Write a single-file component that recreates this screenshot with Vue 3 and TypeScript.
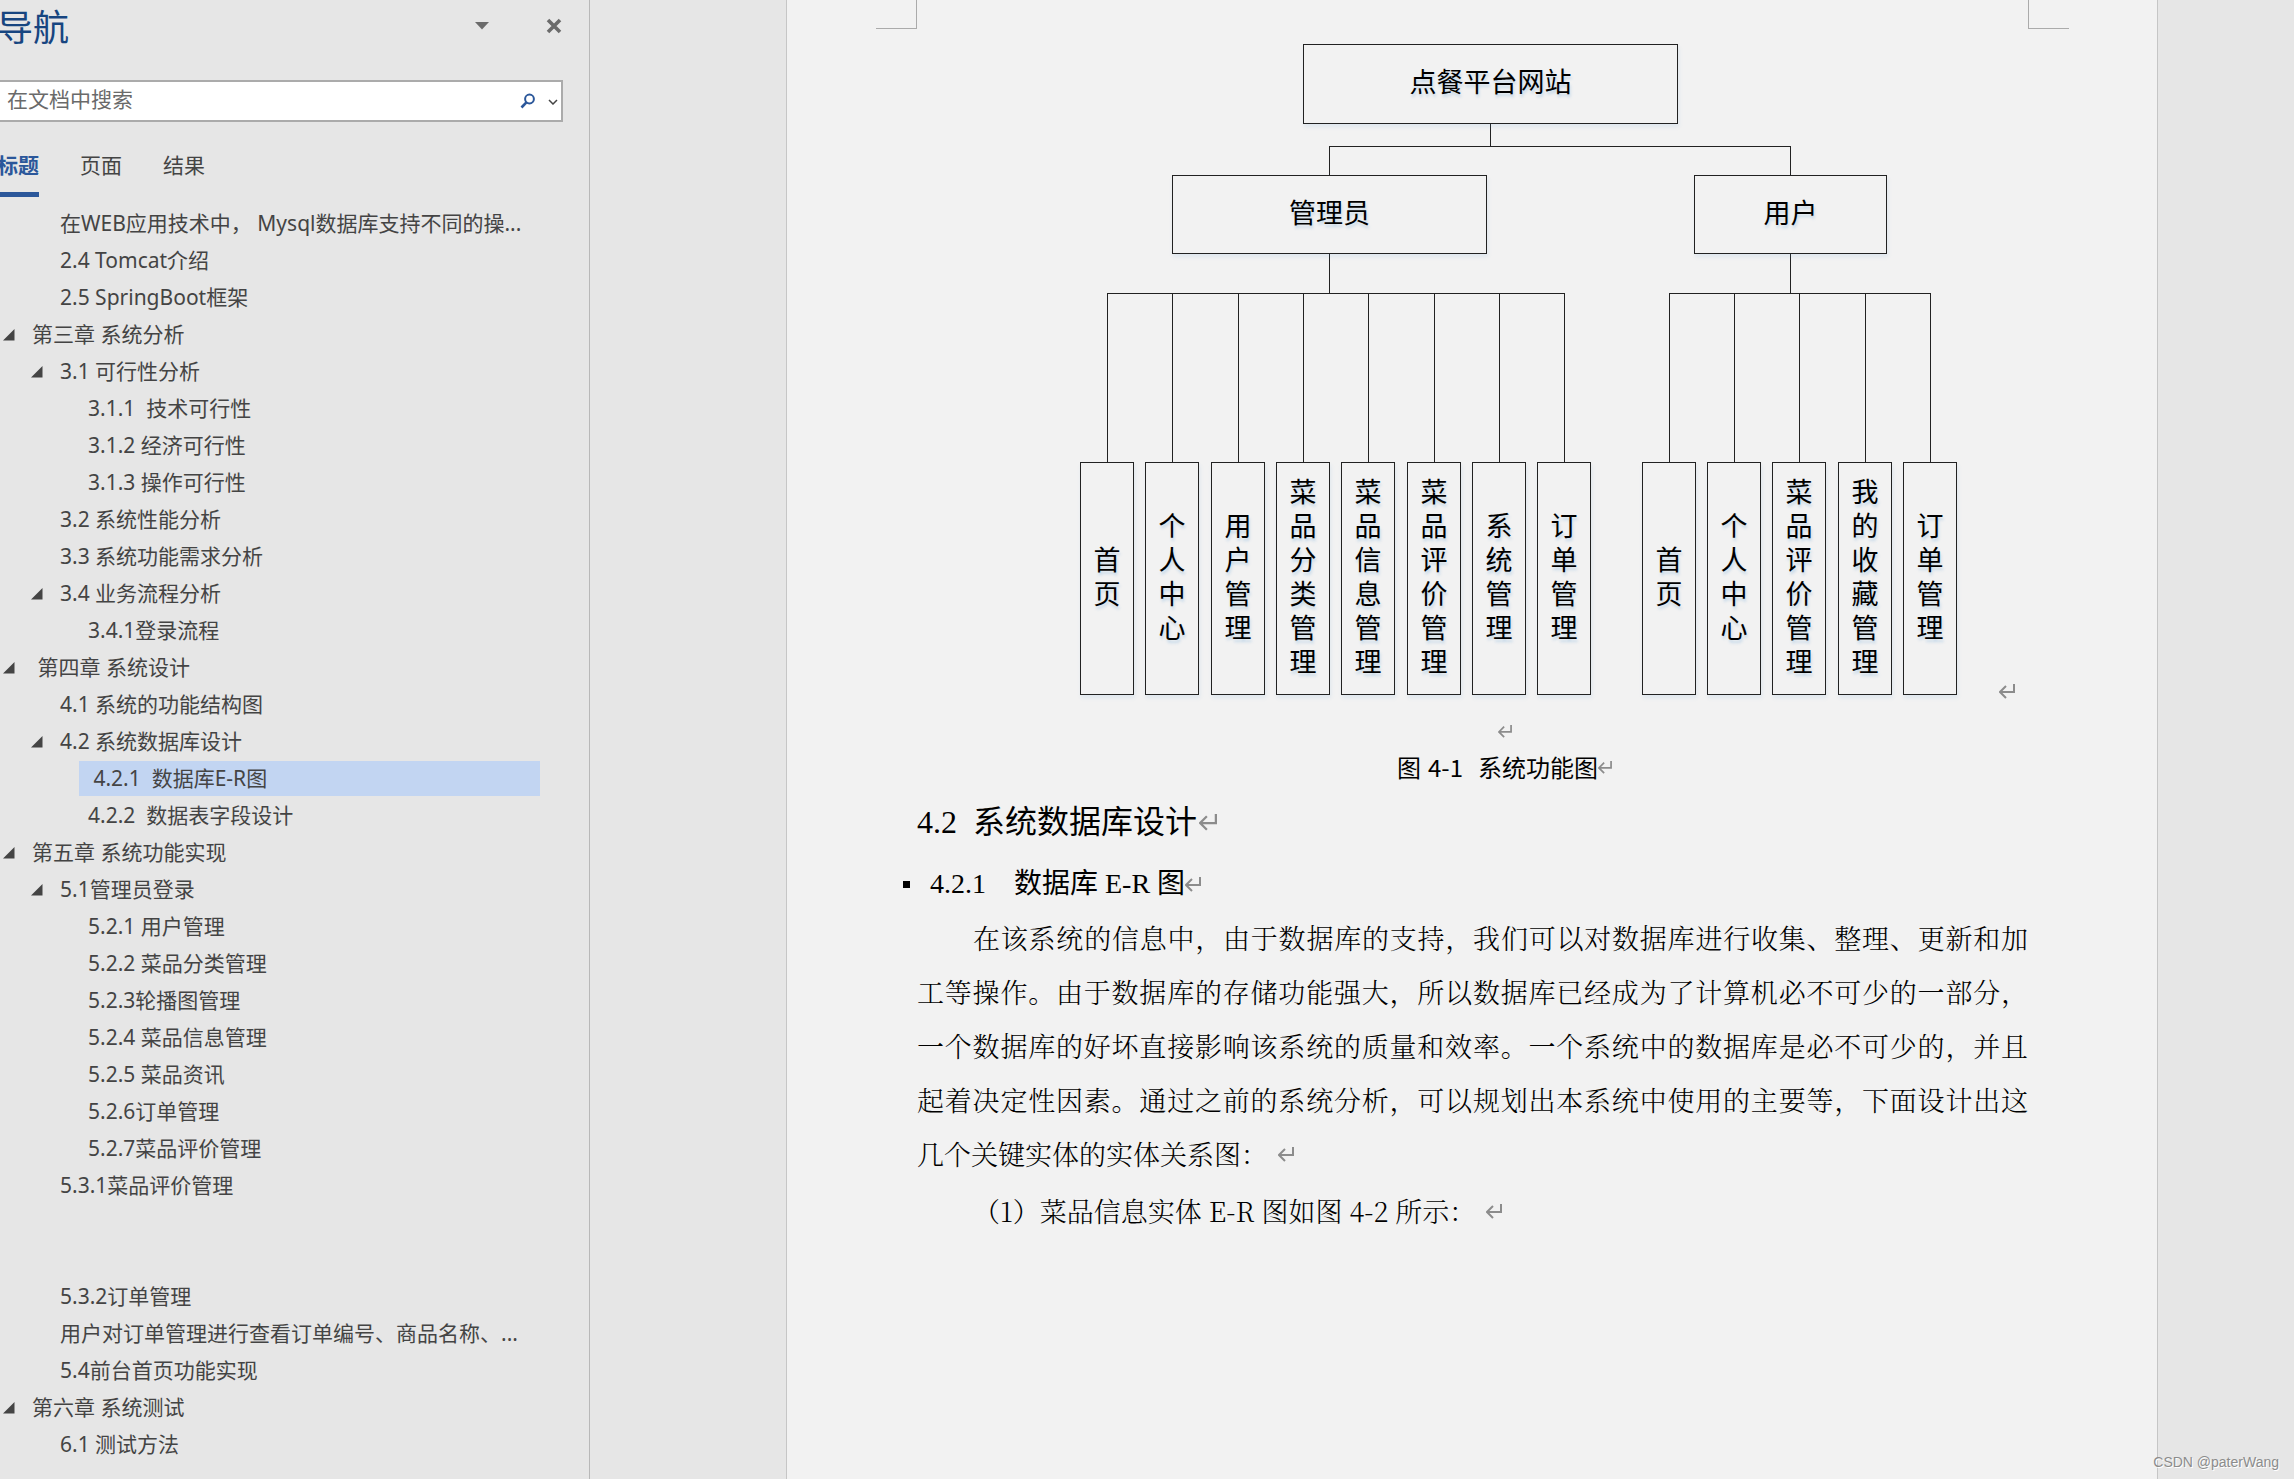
<script setup lang="ts">
import { ref } from 'vue'

interface Heading {
  text: string
  level: 1 | 2 | 3
  open?: boolean
}

interface Box {
  label: string
  x: number
  y: number
  w: number
  h: number
}

const query = ref('')
const activeTab = ref('标题')
const tabs = ['标题', '页面', '结果']
const selected = ref(15)

const headings: Heading[] = [
  { text: '在WEB应用技术中， Mysql数据库支持不同的操...', level: 2 },
  { text: '2.4 Tomcat介绍', level: 2 },
  { text: '2.5 SpringBoot框架', level: 2 },
  { text: '第三章 系统分析', level: 1, open: true },
  { text: '3.1 可行性分析', level: 2, open: true },
  { text: '3.1.1  技术可行性', level: 3 },
  { text: '3.1.2 经济可行性', level: 3 },
  { text: '3.1.3 操作可行性', level: 3 },
  { text: '3.2 系统性能分析', level: 2 },
  { text: '3.3 系统功能需求分析', level: 2 },
  { text: '3.4 业务流程分析', level: 2, open: true },
  { text: '3.4.1登录流程', level: 3 },
  { text: ' 第四章 系统设计', level: 1, open: true },
  { text: '4.1 系统的功能结构图', level: 2 },
  { text: '4.2 系统数据库设计', level: 2, open: true },
  { text: ' 4.2.1  数据库E-R图', level: 3 },
  { text: '4.2.2  数据表字段设计', level: 3 },
  { text: '第五章 系统功能实现', level: 1, open: true },
  { text: '5.1管理员登录', level: 2, open: true },
  { text: '5.2.1 用户管理', level: 3 },
  { text: '5.2.2 菜品分类管理', level: 3 },
  { text: '5.2.3轮播图管理', level: 3 },
  { text: '5.2.4 菜品信息管理', level: 3 },
  { text: '5.2.5 菜品资讯', level: 3 },
  { text: '5.2.6订单管理', level: 3 },
  { text: '5.2.7菜品评价管理', level: 3 },
  { text: '5.3.1菜品评价管理', level: 2 },
  { text: '', level: 2 },
  { text: '', level: 2 },
  { text: '5.3.2订单管理', level: 2 },
  { text: '用户对订单管理进行查看订单编号、商品名称、...', level: 2 },
  { text: '5.4前台首页功能实现', level: 2 },
  { text: '第六章 系统测试', level: 1, open: true },
  { text: '6.1 测试方法', level: 2 },
]

const branches: Box[] = [
  { label: '点餐平台网站', x: 386, y: 0, w: 375, h: 80 },
  { label: '管理员', x: 255, y: 131, w: 315, h: 79 },
  { label: '用户', x: 777, y: 131, w: 193, h: 79 },
]

const leaf = (label: string, x: number): Box => ({ label, x, y: 418, w: 54, h: 233 })

const adminLeaves: Box[] = [
  leaf('首页', 163),
  leaf('个人中心', 228),
  leaf('用户管理', 294),
  leaf('菜品分类管理', 359),
  leaf('菜品信息管理', 424),
  leaf('菜品评价管理', 490),
  leaf('系统管理', 555),
  leaf('订单管理', 620),
]

const userLeaves: Box[] = [
  leaf('首页', 725),
  leaf('个人中心', 790),
  leaf('菜品评价管理', 855),
  leaf('我的收藏管理', 921),
  leaf('订单管理', 986),
]

const leaves = [...adminLeaves, ...userLeaves]
const busY = 249

// Horizontal rail over a row of leaves, one drop to each of them
const rail = (row: Box[]) => {
  const mid = row.map((b) => b.x + 27)
  return `M${mid[0]} ${busY}H${mid[mid.length - 1]}` + mid.map((x) => `M${x} ${busY}V418`).join('')
}

const wires = [
  'M573 80V102M412 102H873M412 102V131M873 102V131',
  `M412 210V${busY}M873 210V${busY}`,
  rail(adminLeaves),
  rail(userLeaves),
].join('')

const place = (b: Box) => ({
  left: `${b.x}px`,
  top: `${b.y}px`,
  width: `${b.w}px`,
  height: `${b.h}px`,
})

const bodyLines = [
  '在该系统的信息中，由于数据库的支持，我们可以对数据库进行收集、整理、更新和加',
  '工等操作。由于数据库的存储功能强大，所以数据库已经成为了计算机必不可少的一部分，',
  '一个数据库的好坏直接影响该系统的质量和效率。一个系统中的数据库是必不可少的，并且',
  '起着决定性因素。通过之前的系统分析，可以规划出本系统中使用的主要等，下面设计出这',
]
</script>

<template>
  <div class="app">
    <aside class="nav">
      <header class="nav-head">
        <h1>导航</h1>
        <button class="icon-btn menu" aria-label="任务窗格选项">
          <svg width="14" height="8" viewBox="0 0 14 8"><path d="M0 0H14L7 7.5Z" fill="#6b6b6b" /></svg>
        </button>
        <button class="icon-btn" aria-label="关闭">
          <svg width="16" height="16" viewBox="0 0 16 16">
            <path d="M2 2L14 14M14 2L2 14" stroke="#6b6b6b" stroke-width="3.6" />
          </svg>
        </button>
      </header>

      <form class="search" @submit.prevent>
        <input v-model="query" type="text" placeholder="在文档中搜索" aria-label="在文档中搜索" />
        <button class="icon-btn" type="submit" aria-label="搜索">
          <svg width="16" height="16" viewBox="0 0 16 16" fill="none" stroke="#2b579a">
            <circle cx="9.5" cy="6" r="4.4" stroke-width="2" />
            <path d="M6.4 9.4L1.5 14.5" stroke-width="2.6" />
          </svg>
        </button>
        <button class="icon-btn more" type="button" aria-label="搜索选项">
          <svg width="10" height="6" viewBox="0 0 10 6" fill="none" stroke="#444" stroke-width="1.5">
            <path d="M1 1L5 5L9 1" />
          </svg>
        </button>
      </form>

      <div class="tabs">
        <button
          v-for="tab in tabs"
          :key="tab"
          class="tab"
          :class="{ active: tab === activeTab }"
          @click="activeTab = tab"
        >
          {{ tab }}
        </button>
      </div>

      <ul class="tree">
        <li v-for="(item, i) in headings" :key="i" :class="'level-' + item.level">
          <button v-if="item.open" class="toggle" aria-label="折叠">
            <svg width="12" height="12" viewBox="0 0 12 12"><path d="M11.5 0V11.5H0Z" fill="#444" /></svg>
          </button>
          <span v-else class="toggle"></span>
          <a v-if="item.text" href="#" :class="{ selected: i === selected }" @click.prevent="selected = i">{{ item.text }}</a>
        </li>
      </ul>
    </aside>

    <main class="desk">
      <article class="page">
        <span class="crop left"></span>
        <span class="crop right"></span>

        <div class="diagram">
          <svg class="wires" width="1111" height="651" viewBox="0 0 1111 651">
            <path :d="wires" fill="none" stroke="#222" stroke-width="1" shape-rendering="crispEdges" />
          </svg>
          <div v-for="b in branches" :key="b.label" class="box" :style="place(b)">{{ b.label }}</div>
          <div v-for="(b, i) in leaves" :key="i" class="box" :style="place(b)">
            <span class="stack">{{ b.label }}</span>
          </div>
          <svg class="ret ret-diagram" viewBox="0 0 16 15"><path d="M15 0V8H1M7 2L1 8L7 14" /></svg>
        </div>

        <p class="centered">
          <svg class="ret small" viewBox="0 0 16 15"><path d="M15 0V8H1M7 2L1 8L7 14" /></svg>
        </p>
        <p class="centered caption">
          <span>图</span><span class="num">4-1</span><span>系统功能图</span>
          <svg class="ret small" viewBox="0 0 16 15"><path d="M15 0V8H1M7 2L1 8L7 14" /></svg>
        </p>

        <h2>
          <span>4.2&nbsp; 系统数据库设计</span>
          <svg class="ret large" viewBox="0 0 16 15"><path d="M15 0V8H1M7 2L1 8L7 14" /></svg>
        </h2>
        <h3>
          <i class="bullet"></i>
          <span class="sec">4.2.1</span><span>数据库 E-R 图</span>
          <svg class="ret" viewBox="0 0 16 15"><path d="M15 0V8H1M7 2L1 8L7 14" /></svg>
        </h3>

        <p class="body">
          <span v-for="line in bodyLines" :key="line" class="full">{{ line }}</span>
          <span class="tail">几个关键实体的实体关系图：<svg class="ret" viewBox="0 0 16 15"><path d="M15 0V8H1M7 2L1 8L7 14" /></svg></span>
        </p>
        <p class="body item">
          <span class="tail">（1）菜品信息实体 E-R 图如图 4-2 所示：<svg class="ret" viewBox="0 0 16 15"><path d="M15 0V8H1M7 2L1 8L7 14" /></svg></span>
        </p>
      </article>
      <span class="watermark">CSDN @paterWang</span>
    </main>
  </div>
</template>

<style>
body {
  background: #e6e6e6;
}
</style>

<style scoped>
.app {
  display: flex;
  min-height: 100vh;
  overflow: hidden;
  background: #e6e6e6;
  color: #444;
  font-family: 'Noto Sans', 'Noto Sans CJK SC', sans-serif;
  font-size: 21px;
}
button {
  border: 0;
  padding: 0;
  background: none;
  color: inherit;
  font: inherit;
}
p,
h1,
h2,
h3,
ul {
  margin: 0;
  padding: 0;
  font-weight: 400;
}
svg {
  display: block;
  flex: none;
}

/* Navigation pane */
.nav {
  flex: none;
  box-sizing: border-box;
  width: 590px;
  border-right: 1px solid #b8b8b8;
}
.nav-head {
  display: flex;
  align-items: center;
  height: 52px;
  padding-right: 27px;
}
.nav-head h1 {
  flex: 1;
  margin-left: -3px;
  padding-top: 4px;
  color: #174580;
  font-size: 36px;
  line-height: 52px;
}
.icon-btn {
  display: flex;
  align-items: center;
  justify-content: center;
}
.menu {
  margin-right: 57px;
}
.search {
  display: flex;
  align-items: center;
  box-sizing: border-box;
  height: 42px;
  margin: 28px 26px 0 -2px;
  border: 2px solid #ababab;
  background: #fff;
}
.search input {
  flex: 1;
  min-width: 0;
  height: 34px;
  border: 0;
  padding: 0 0 4px 7px;
  outline: 0;
  background: none;
  color: #444;
  font: inherit;
}
.search input::placeholder {
  color: #6a6a6a;
  opacity: 1;
}
.more {
  margin: 2px 3px 0 12px;
}
.tabs {
  display: flex;
  gap: 41px;
  height: 59px;
  padding-top: 16px;
}
.tab {
  box-sizing: border-box;
  height: 59px;
  padding: 0 0 7px;
}
.tab.active {
  margin-left: -3px;
  border-bottom: 5px solid #2b579a;
  padding-bottom: 2px;
  color: #2b579a;
  font-weight: 700;
}
.tree {
  margin-top: 8px;
  list-style: none;
}
.tree li {
  display: flex;
  align-items: center;
  gap: 8px;
  height: 37px;
  padding-right: 49px;
}
.level-1 {
  padding-left: 3px;
}
.level-2 {
  padding-left: 31px;
}
.level-3 {
  padding-left: 59px;
}
.toggle {
  flex: none;
  width: 12px;
}
.tree a {
  flex: 1;
  height: 35px;
  padding-left: 9px;
  color: #444;
  line-height: 35px;
  text-decoration: none;
  white-space: pre;
}
.tree a.selected {
  background: #c2d5f2;
}

/* Document */
.desk {
  position: relative;
  flex: 1;
  display: flex;
  padding: 0 136px 0 196px;
}
.page {
  position: relative;
  flex: 1;
  min-width: 0;
  border: solid #c6c6c6;
  border-width: 0 1px;
  padding: 44px 129px 0 130px;
  background: #f2f2f2;
  color: #000;
}
.crop {
  position: absolute;
  top: 0;
  width: 40px;
  height: 28px;
  border: solid #ababab;
}
.crop.left {
  left: 89px;
  border-width: 0 1px 1px 0;
}
.crop.right {
  right: 88px;
  border-width: 0 0 1px 1px;
}
.diagram {
  position: relative;
  height: 651px;
}
.wires {
  position: absolute;
  inset: 0;
}
.box {
  position: absolute;
  box-sizing: border-box;
  display: flex;
  align-items: center;
  justify-content: center;
  border: 1px solid #222;
  padding-bottom: 6px;
  box-shadow: 1px 3px 4px rgba(91, 155, 213, 0.12);
  background: #f2f2f2;
  font-family: 'Noto Sans CJK SC', sans-serif;
  font-size: 27px;
  line-height: 34px;
  text-shadow: 1px 3px 3px rgba(91, 155, 213, 0.3);
}
.stack {
  width: 27px;
  word-break: break-all;
}
.ret {
  width: 16px;
  height: 15px;
  fill: none;
  stroke: #8c8c8c;
  stroke-width: 2;
}
.ret.small {
  width: 14px;
  height: 13px;
}
.ret.large {
  width: 18px;
  height: 17px;
}
.ret-diagram {
  position: absolute;
  right: 13px;
  bottom: -4px;
}
.centered {
  display: flex;
  align-items: center;
  justify-content: center;
  height: 37px;
  padding-left: 64px;
}
.diagram + .centered {
  margin-top: 18px;
}
.caption {
  font-family: 'Noto Sans CJK SC', sans-serif;
  font-size: 24px;
  line-height: 34px;
  height: 34px;
  margin-bottom: 3px;
}
.num {
  margin: 0 15px 0 7px;
}
h2,
h3 {
  display: flex;
  align-items: center;
  font-family: 'Liberation Serif', 'Noto Sans CJK SC', serif;
}
h2 {
  font-size: 32px;
  line-height: 70px;
}
h2 .ret {
  margin-left: 2px;
}
h3 {
  font-size: 28px;
  line-height: 54px;
}
.bullet {
  width: 7px;
  height: 7px;
  margin: 0 20px 0 -14px;
  background: #000;
}
.sec {
  margin-right: 28px;
}
.body {
  font-family: 'Noto Serif CJK SC', 'Liberation Serif', 'Noto Sans CJK SC', serif;
  font-size: 27px;
  font-weight: 300;
  line-height: 54px;
}
.full {
  display: block;
  text-align: justify;
  text-align-last: justify;
  white-space: nowrap;
}
.full:first-child {
  padding-left: 56px;
}
.tail {
  display: flex;
  align-items: center;
  gap: 10px;
}
.item {
  margin-top: 3px;
  padding-left: 56px;
}
.watermark {
  position: absolute;
  right: 15px;
  bottom: 7px;
  color: #8c8c8c;
  font-family: 'Liberation Sans', sans-serif;
  font-size: 14px;
  line-height: 20px;
  text-shadow: 1px 1px 0 #fff;
}
</style>
